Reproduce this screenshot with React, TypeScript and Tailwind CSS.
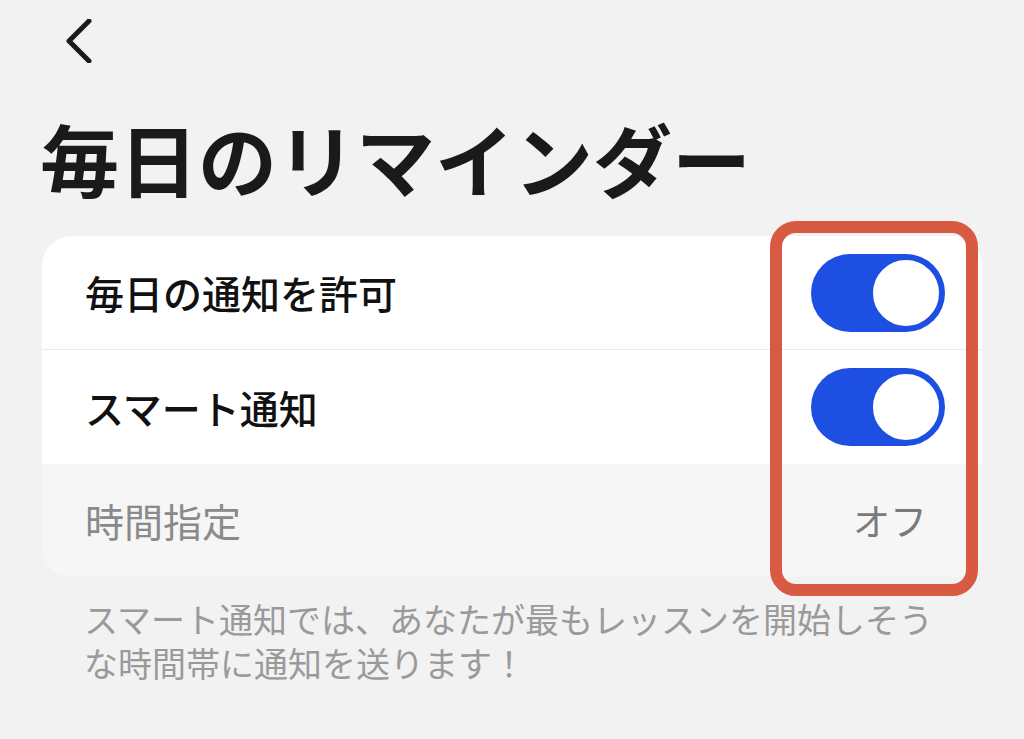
const jp = { fontFamily: '"Noto Sans CJK JP", "Noto Sans", sans-serif' };

function Toggle() {
  return (
    <div className="flex h-[78px] w-[134px] items-center justify-end rounded-full bg-[#1d4fe3] pr-[3px]">
      <div className="h-[72px] w-[72px] rounded-full border-[3px] border-[#1d4fe3] bg-white" />
    </div>
  );
}

export default function App() {
  return (
    <div className="h-[739px] w-[1024px] overflow-hidden bg-[#f2f2f2]" style={jp}>
      {/* Back */}
      <div className="pl-[66px] pt-[19px]">
        <svg width="28" height="44" viewBox="0 0 28 44" fill="none">
          <path d="M23 2 L3 22 L23 42" stroke="#1a1a1a" strokeWidth="5" strokeLinecap="round" strokeLinejoin="round" />
        </svg>
      </div>

      <h1 className="mt-[55px] pl-[40px] text-[79px] font-bold leading-none text-[#1a1a1a]">
        毎日のリマインダー
      </h1>

      <div className="relative mx-[42px] mt-[39px]">
        <div className="overflow-hidden rounded-[30px] bg-white">
          <div className="flex h-[114px] items-center justify-between border-b border-[#ececec] pl-[43px] pr-[37px]">
            <span className="text-[39px] font-medium leading-none text-[#111]">毎日の通知を許可</span>
            <Toggle />
          </div>
          <div className="flex h-[114px] items-center justify-between pl-[43px] pr-[37px]">
            <span className="text-[39px] font-medium leading-none text-[#111]">スマート通知</span>
            <Toggle />
          </div>
          <div className="flex h-[113px] items-center justify-between bg-[#f6f6f6] pl-[43px] pr-[55px]">
            <span className="text-[39px] leading-none text-[#8a8a8a]">時間指定</span>
            <span className="text-[37px] leading-none text-[#7a7a7a]">オフ</span>
          </div>
        </div>

        {/* highlight frame */}
        <div className="pointer-events-none absolute left-[728px] top-[-15px] h-[375px] w-[208px] rounded-[26px] border-[12px] border-[#d85a42]" />
      </div>

      <p className="mt-[20px] pl-[84px] pr-[64px] text-[34px] leading-[44px] text-[#9a9a9a]">
        スマート通知では、あなたが最もレッスンを開始しそうな時間帯に通知を送ります！
      </p>
    </div>
  );
}
